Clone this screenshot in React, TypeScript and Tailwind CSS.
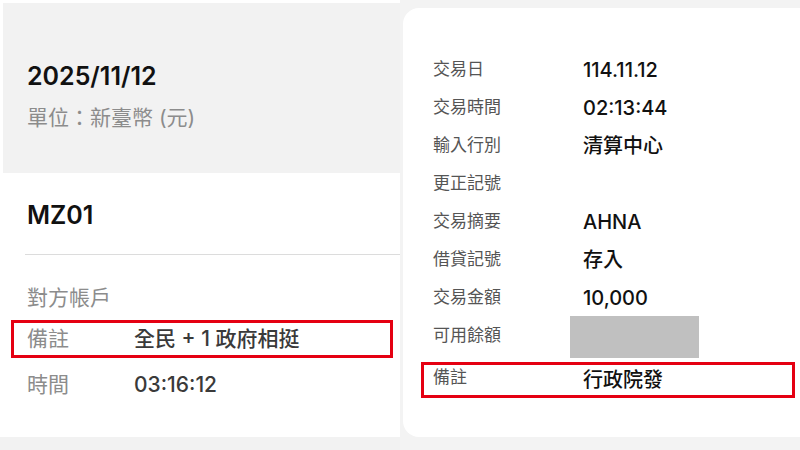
import React from "react";

const font = { fontFamily: 'Inter, "Noto Sans CJK TC", "Noto Sans", sans-serif' };

function RightRow({ label, value }: { label: string; value?: string }) {
  return (
    <div className="flex h-[38px] items-center pl-[30px]">
      <div className="w-[150px] text-[17px] text-[#555555]">{label}</div>
      <div className="text-[20px] font-medium text-[#111111]">{value}</div>
    </div>
  );
}

export default function App() {
  return (
    <div className="flex h-[450px] w-[800px] overflow-hidden bg-white" style={font}>
      {/* Left panel */}
      <div className="flex w-[400px] flex-col">
        <div className="mt-[3px] ml-[3px] flex h-[170px] flex-col bg-[#f2f2f2] pl-[24px] pt-[53px]">
          <div className="flex h-[40px] items-center text-[25px] font-semibold leading-none text-[#111111]">
            2025/11/12
          </div>
          <div className="mt-[6px] flex h-[30px] items-center text-[21px] leading-none text-[#8c8c8c]">
            單位：新臺幣 (元)
          </div>
        </div>
        <div className="flex flex-1 flex-col">
          <div className="mt-[22px] flex h-[40px] items-center pl-[27px] text-[25px] font-semibold leading-none text-[#111111]">
            MZ01
          </div>
          <div className="ml-[25px] mt-[19px] h-px bg-[#dcdcdc]" />
          <div className="mt-[24px] flex h-[38px] items-center pl-[27px] text-[21px] text-[#8c8c8c]">
            對方帳戶
          </div>
          <div className="ml-[11px] mt-[3px] flex h-[38px] w-[382px] items-center border-[3px] border-[#e50012] pl-[13px]">
            <div className="w-[107px] text-[21px] text-[#8c8c8c]">備註</div>
            <div className="text-[21px] font-medium text-[#3a3a3a]">全民 + 1 政府相挺</div>
          </div>
          <div className="mt-[8px] flex h-[38px] items-center pl-[27px]">
            <div className="w-[107px] text-[21px] text-[#8c8c8c]">時間</div>
            <div className="text-[21px] font-medium text-[#3a3a3a]">03:16:12</div>
          </div>
        </div>
        <div className="h-[13px] bg-[#f2f2f2]" />
      </div>

      {/* Right panel */}
      <div className="flex flex-1 flex-col bg-[#f3f3f3] pl-[3px] pt-[8px] pb-[13px]">
        <div className="flex flex-1 flex-col rounded-l-[16px] bg-white pt-[43px]">
          <RightRow label="交易日" value="114.11.12" />
          <RightRow label="交易時間" value="02:13:44" />
          <RightRow label="輸入行別" value="清算中心" />
          <RightRow label="更正記號" />
          <RightRow label="交易摘要" value="AHNA" />
          <RightRow label="借貸記號" value="存入" />
          <RightRow label="交易金額" value="10,000" />
          <div className="flex h-[38px] items-center pl-[30px]">
            <div className="w-[137px] text-[17px] text-[#555555]">可用餘額</div>
            <div className="mt-[2px] h-[42px] w-[129px] bg-[#c0c0c0]" />
          </div>
          <div className="ml-[18px] mt-[7px] flex h-[36px] w-[374px] items-center border-[3px] border-[#e50012] pl-[9px]">
            <div className="mb-[4px] w-[150px] text-[17px] text-[#555555]">備註</div>
            <div className="text-[20px] font-medium text-[#111111]">行政院發</div>
          </div>
        </div>
      </div>
    </div>
  );
}
